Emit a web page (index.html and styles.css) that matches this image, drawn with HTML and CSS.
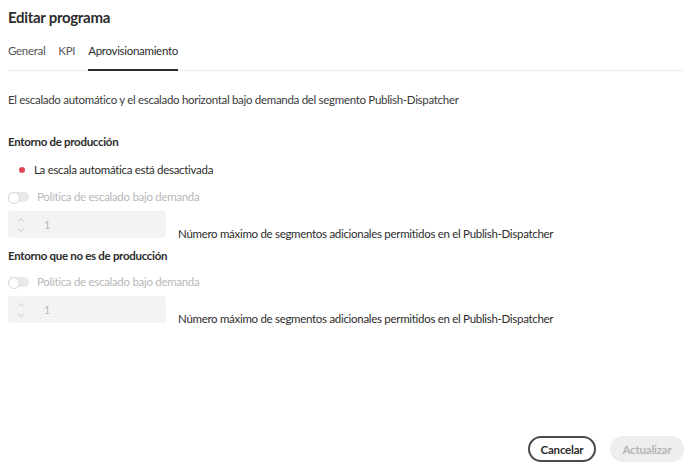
FILE: index.html
```html
<!DOCTYPE html>
<html lang="es">
<head>
<meta charset="utf-8">
<link rel="stylesheet" href="styles.css">
</head>
<body>
<div class="dialog">
  <h1 class="title">Editar programa</h1>
  <div class="tabs">
    <span class="tab">General</span>
    <span class="tab">KPI</span>
    <span class="tab active">Aprovisionamiento</span>
  </div>
  <p class="desc">El escalado automático y el escalado horizontal bajo demanda del segmento Publish-Dispatcher</p>

  <h2 class="section">Entorno de producción</h2>
  <div class="status"><span class="dot"></span>La escala automática está desactivada</div>
  <div class="toggle-row"><span class="switch"></span>Política de escalado bajo demanda</div>
  <div class="field-row">
    <div class="stepper">
      <span class="arrows">
        <svg width="10" height="22" viewBox="0 0 10 22"><path d="M2 7.5 L5 4.5 L8 7.5" fill="none" stroke="#c8c8c8" stroke-width="1"/><path d="M2 14.5 L5 17.5 L8 14.5" fill="none" stroke="#c8c8c8" stroke-width="1"/></svg>
      </span>
      <span class="value">1</span>
    </div>
    <span class="field-label">Número máximo de segmentos adicionales permitidos en el Publish-Dispatcher</span>
  </div>

  <h2 class="section section2">Entorno que no es de producción</h2>
  <div class="toggle-row toggle2"><span class="switch"></span>Política de escalado bajo demanda</div>
  <div class="field-row">
    <div class="stepper">
      <span class="arrows">
        <svg width="10" height="22" viewBox="0 0 10 22"><path d="M2 7.5 L5 4.5 L8 7.5" fill="none" stroke="#c8c8c8" stroke-width="1"/><path d="M2 14.5 L5 17.5 L8 14.5" fill="none" stroke="#c8c8c8" stroke-width="1"/></svg>
      </span>
      <span class="value">1</span>
    </div>
    <span class="field-label">Número máximo de segmentos adicionales permitidos en el Publish-Dispatcher</span>
  </div>

  <div class="footer">
    <button class="btn btn-secondary">Cancelar</button>
    <button class="btn btn-disabled">Actualizar</button>
  </div>
</div>
</body>
</html>
```
FILE: styles.css
```css
* { box-sizing: border-box; }
html, body { margin: 0; padding: 0; background: #fff; }
body {
  font-family: Lato, "Open Sans", "Liberation Sans", sans-serif;
  color: #2c2c2c;
  width: 694px;
  height: 474px;
  overflow: hidden;
}
.dialog {
  padding: 0 10px 0 8px;
  display: flex;
  flex-direction: column;
  height: 474px;
}
.title {
  margin: 7px 0 0 0;
  font-size: 15px;
  font-weight: 700;
  line-height: 20px;
  letter-spacing: -0.3px;
  color: #2c2c2c;
}
.tabs {
  display: flex;
  gap: 13px;
  margin-top: 15px;
  border-bottom: 1px solid #ececec;
  height: 29px;
}
.tab {
  font-size: 11.5px;
  line-height: 16px;
  color: #555;
  letter-spacing: -0.3px;
  padding-top: 1px;
}
.tab.active {
  color: #2c2c2c;
  border-bottom: 2px solid #2c2c2c;
  height: 29px;
}
.desc {
  margin: 21px 0 0 0;
  font-size: 11.5px;
  line-height: 16px;
  letter-spacing: -0.3px;
  color: #3a3a3a;
}
.section {
  margin: 26px 0 0 0;
  font-size: 11.5px;
  font-weight: 700;
  line-height: 16px;
  letter-spacing: -0.3px;
  color: #2c2c2c;
}
.section2 { margin-top: 10px; }
.status {
  display: flex;
  align-items: center;
  margin-top: 12px;
  font-size: 11.5px;
  line-height: 16px;
  letter-spacing: -0.3px;
  color: #2c2c2c;
}
.dot {
  width: 6px; height: 6px;
  border-radius: 50%;
  background: #e34850;
  margin: 0 9px 0 11px;
}
.toggle-row {
  display: flex;
  align-items: center;
  margin-top: 11px;
  font-size: 11.5px;
  line-height: 16px;
  letter-spacing: -0.3px;
  color: #b8b8b8;
}
.toggle2 { margin-top: 10px; }
.switch {
  position: relative;
  width: 21px; height: 10px;
  border-radius: 5px;
  background: #e9e9e9;
  margin-right: 8px;
}
.switch::before {
  content: "";
  position: absolute;
  left: 0; top: 0;
  width: 10px; height: 10px;
  border-radius: 50%;
  border: 1.5px solid #d8d8d8;
  background: #fff;
}
.field-row {
  display: flex;
  align-items: flex-end;
  margin-top: 6px;
}
.stepper {
  width: 158px;
  height: 27px;
  background: #f3f3f3;
  border-radius: 3px;
  display: flex;
  align-items: center;
}
.arrows {
  display: flex;
  margin-left: 8px;
  width: 10px;
}
.value {
  margin-left: 18px;
  font-size: 11px;
  color: #b8b8b8;
}
.field-label {
  margin-left: 12px;
  font-size: 11.5px;
  line-height: 16px;
  letter-spacing: -0.3px;
  color: #2c2c2c;
  margin-bottom: -4px;
}
.footer {
  margin-top: auto;
  margin-bottom: 12px;
  display: flex;
  justify-content: flex-end;
  gap: 14px;
}
.btn {
  font-family: inherit;
  font-size: 11.5px;
  font-weight: 700;
  height: 26px;
  border-radius: 13px;
  padding: 0;
  letter-spacing: -0.2px;
}
.btn-secondary {
  border: 2px solid #4b4b4b;
  background: #fff;
  color: #2c2c2c;
  width: 68px;
}
.btn-disabled {
  border: none;
  background: #eeeeee;
  color: #b5b5b5;
  width: 74px;
}
```
